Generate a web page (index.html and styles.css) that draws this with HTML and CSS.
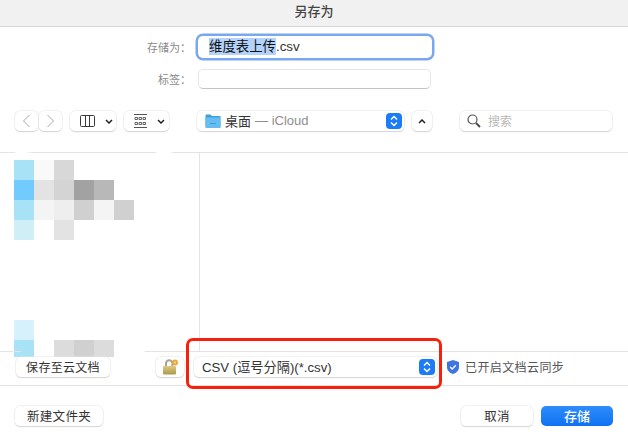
FILE: index.html
```html
<!DOCTYPE html>
<html lang="zh">
<head>
<meta charset="utf-8">
<title>另存为</title>
<link rel="stylesheet" href="styles.css">
</head>
<body>
<div class="dialog">
  <header class="titlebar">另存为</header>
  <section class="form">
    <div class="form-row">
      <label class="form-label">存储为：</label>
      <div class="field field-focus"><span class="sel">维度表上传</span>.csv</div>
    </div>
    <div class="form-row form-row-tags">
      <label class="form-label">标签：</label>
      <div class="field field-tags"></div>
    </div>
  </section>
  <nav class="toolbar">
    <div class="seg">
      <div class="btn nav-btn"><svg width="9" height="14" viewBox="0 0 9 14"><path d="M7.500 1 1.500 7l6 6" fill="none" stroke="#a8a8a8" stroke-width="1"/></svg></div>
      <div class="btn nav-btn"><svg width="9" height="14" viewBox="0 0 9 14"><path d="M1.500 1l6 6-6 6" fill="none" stroke="#a8a8a8" stroke-width="1"/></svg></div>
    </div>
    <div class="btn view-btn">
      <svg width="15" height="12" viewBox="0 0 15 12"><path d="M1.500.5h12a1 1 0 0 1 1 1v9a1 1 0 0 1-1 1h-12a1 1 0 0 1-1-1v-9a1 1 0 0 1 1-1zM5.500.5v11M9.500.5v11" fill="none" stroke="#3a3a3a"/></svg>
      <svg class="chev" width="8" height="5" viewBox="0 0 8 5"><path d="M1 1l3 3 3-3" fill="none" stroke="#222" stroke-width="1.500"/></svg>
    </div>
    <div class="btn grid-btn">
      <svg width="13" height="14" viewBox="0 0 13 14"><path d="M0 .5h13M0 13.500h13" stroke="#555"/><path d="M1 3.500h2.500v2H1zM5 3.500h2.500v2H5zM9 3.500h2.500v2H9zM1 8.500h2.500v2H1zM5 8.500h2.500v2H5zM9 8.500h2.500v2H9z" fill="none" stroke="#555" stroke-width=".9"/></svg>
      <svg class="chev" width="8" height="5" viewBox="0 0 8 5"><path d="M1 1l3 3 3-3" fill="none" stroke="#222" stroke-width="1.500"/></svg>
    </div>
    <div class="btn path-btn">
      <svg class="folder" width="16" height="14" viewBox="0 0 16 14"><path d="M.5 1.500a1 1 0 0 1 1-1h4l1.500 1.500h7.500a1 1 0 0 1 1 1V13a.8.8 0 0 1-.8.8H1.300A.8.8 0 0 1 .5 13z" fill="#3f9fd8"/><path d="M.5 3.500h15V13a.8.8 0 0 1-.8.800H1.300A.8.800 0 0 1 .5 13z" fill="#66bef0"/><path d="M5 9.500h6" stroke="#3f9dd0"/></svg>
      <span class="path-name">桌面</span><span class="path-loc">— iCloud</span>
      <span class="stepper"><svg width="8" height="12" viewBox="0 0 8 12"><path d="M1 4.500l3-3 3 3M1 7.500l3 3 3-3" fill="none" stroke="#fff" stroke-width="1.500"/></svg></span>
    </div>
    <div class="btn up-btn"><svg width="8" height="5" viewBox="0 0 8 5"><path d="M1 4l3-3 3 3" fill="none" stroke="#222" stroke-width="1.500"/></svg></div>
    <div class="btn search">
      <svg width="14" height="14" viewBox="0 0 14 14"><circle cx="5.500" cy="5.500" r="4.500" fill="none" stroke="#555" stroke-width="1.200"/><path d="M9 9l4 4" stroke="#444" stroke-width="1.800"/></svg>
      <span class="search-text">搜索</span>
    </div>
  </nav>
  <main class="browser">
    <aside class="sidebar">
      <div class="mosaic">
        <i class="c1"></i><i class="c2"></i><i class="c3"></i><i></i><i></i><i></i>
        <i class="c4"></i><i class="c5"></i><i class="c6"></i><i class="c7"></i><i class="c8"></i><i></i>
        <i class="c1"></i><i class="c9"></i><i class="c10"></i><i class="c11"></i><i class="c9"></i><i class="c11"></i>
        <i class="c12"></i><i></i><i class="c5"></i><i></i><i></i><i></i>
      </div>
      <div class="mosaic mosaic-low">
        <i class="c13"></i><i></i><i></i><i></i><i></i><i></i>
        <i class="c1"></i><i></i><i class="c14"></i><i class="c15"></i><i class="c14"></i><i></i>
      </div>
    </aside>
    <div class="files"></div>
  </main>
  <section class="optbar">
    <div class="btn text-btn cloud-btn">保存至云文档</div>
    <div class="btn lock-btn">
      <svg width="17" height="16" viewBox="0 0 17 16"><defs><linearGradient id="lockBody" x1="0" y1="0" x2="0" y2="1"><stop offset="0" stop-color="#dccb84"/><stop offset="1" stop-color="#ad9748"/></linearGradient></defs><path d="M4 8V4.500a3.200 3.200 0 0 1 6.400 0V8" fill="none" stroke="#a8a58c" stroke-width="2"/><rect x="1" y="7" width="13" height="8.500" rx="1" fill="url(#lockBody)"/><circle cx="13" cy="3.500" r="3" fill="#eca83a"/><circle cx="13" cy="3.500" r="1" fill="#f8dca0"/></svg>
    </div>
    <div class="btn format">
      <span class="format-text">CSV (逗号分隔)(*.csv)</span>
      <span class="stepper"><svg width="8" height="12" viewBox="0 0 8 12"><path d="M1 4.500l3-3 3 3M1 7.500l3 3 3-3" fill="none" stroke="#fff" stroke-width="1.500"/></svg></span>
    </div>
    <svg class="shield" width="12" height="14" viewBox="0 0 12 14"><path d="M6 0l6 2v5c0 3.500-2.500 5.800-6 7-3.500-1.200-6-3.500-6-7V2z" fill="#3d76e0"/><path d="M3.200 7l2 2 3.600-3.800" fill="none" stroke="#fff" stroke-width="1.300"/></svg>
    <span class="sync">已开启文档云同步</span>
    <div class="annotation"></div>
  </section>
  <footer class="actions">
    <div class="btn text-btn new-btn">新建文件夹</div>
    <div class="spacer"></div>
    <div class="btn text-btn cancel-btn">取消</div>
    <div class="btn save-btn">存储</div>
  </footer>
</div>
</body>
</html>
```
FILE: styles.css
```css
* { box-sizing: border-box; }
html, body { margin: 0; padding: 0; background: #fff; }
body { font-family: "Liberation Sans", "Noto Sans CJK SC", sans-serif; font-size: 12px; color: #2a2a2a; }
.dialog { width: 628px; height: 440px; display: flex; flex-direction: column; overflow: hidden; }
.titlebar { height: 27px; flex: none; background: #f1f1f1; border-bottom: 1px solid #d6d6d6; text-align: center; font-size: 13px; line-height: 24px; font-weight: 500; color: #444; }
.form { padding: 9px 0 0; }
.form-row { display: flex; align-items: center; height: 22px; }
.form-row-tags { margin-top: 11px; height: 20px; }
.form-label { width: 191px; text-align: right; font-size: 11px; color: #8a8a8a; padding-bottom: 1px; }
.field { margin-left: 7px; width: 234px; background: #fff; }
.field-focus { height: 22px; font-size: 13.400px; line-height: 21px; color: #333; padding-left: 11px; border-radius: 5px; box-shadow: 0 0 0 2.500px #7aa8f0; }
.sel { background: #b3d3fb; color: #111; display: inline-block; height: 17px; line-height: 17px; vertical-align: top; margin-top: 2px; }
.field-tags { height: 20px; width: 233px; border: 1px solid #e6e6e6; border-bottom-color: #c4c4c4; border-radius: 5px; }
.toolbar { margin-top: 22px; padding-left: 15px; display: flex; height: 20px; }
.btn { height: 20px; background: #fff; border-radius: 5px; box-shadow: 0 0 0 .5px #e3e3e3, 0 1px 1px rgba(0,0,0,.22); display: flex; align-items: center; flex: none; }
.seg { display: flex; gap: 1px; }
.nav-btn { width: 23px; justify-content: center; }
.view-btn { width: 46px; margin-left: 8px; padding-left: 10px; }
.grid-btn { width: 45px; margin-left: 8px; padding-left: 10px; }
.chev { margin-left: 10px; }
.grid-btn .chev { margin-left: 10px; }
.path-btn { width: 207px; margin-left: 28px; padding-left: 8px; font-size: 13px; }
.folder { flex: none; }
.path-name { margin-left: 4px; color: #333; padding-bottom: 1px; }
.path-loc { margin-left: 4px; color: #8e8e8e; padding-bottom: 1px; }
.stepper { width: 16px; height: 16px; background: #1c7bf6; border-radius: 4px; display: flex; align-items: center; justify-content: center; margin-left: auto; margin-right: 2px; flex: none; }
.up-btn { width: 20px; margin-left: 8px; justify-content: center; }
.search { width: 152px; margin-left: 28px; padding-left: 7px; }
.search-text { margin-left: 7px; color: #b8b8b8; font-size: 12px; padding-bottom: 1px; }
.browser { margin-top: 21px; height: 199px; flex: none; display: flex; border-style: solid; border-width: 1px 0 0; border-image: linear-gradient(90deg, #e3e3e3 14px, transparent 18px, transparent 26px, #e3e3e3 34px, #e3e3e3 155px, transparent 158px, transparent 170px, #e3e3e3 174px) 1; }
.sidebar { width: 200px; flex: none; border-right: 1px solid #e3e3e3; padding: 7px 0 0 14px; display: flex; flex-direction: column; justify-content: space-between; }
.mosaic { display: grid; grid-template-columns: repeat(6, 20px); grid-auto-rows: 20px; }
.mosaic-low { grid-template-rows: 20px 17px; margin-bottom: -6px; }
.files { flex: 1; }
.c1 { background: #a8e2f6; } .c2 { background: #f9f9f9; } .c3 { background: #d8d8d8; }
.c4 { background: #72cbfd; } .c5 { background: #e3e3e3; } .c6 { background: #d4d4d4; }
.c7 { background: #a2a2a2; } .c8 { background: #b8b8b8; } .c9 { background: #f4f4f4; }
.c10 { background: #eeeeee; } .c11 { background: #d0d0d0; } .c12 { background: #cfeef6; }
.c13 { background: #d6f1fc; } .c14 { background: #dcdcdc; } .c15 { background: #d0d0d0; }
.optbar { height: 34px; flex: none; position: relative; display: flex; align-items: center; padding: 0 0 3px 16px; border-style: solid; border-width: 1px 0 0; border-image: linear-gradient(90deg, #e3e3e3 20px, transparent 24px, transparent 144px, #e3e3e3 147px) 1; font-size: 12px; }
.text-btn { justify-content: center; color: #333; letter-spacing: .3px; padding-bottom: 1px; }
.cloud-btn { width: 94px; }
.lock-btn { width: 28px; margin-left: 46px; justify-content: center; }
.format { width: 243px; margin-left: 10px; padding-left: 8px; color: #333; font-size: 13.200px; }
.format-text { padding-bottom: 1px; }
.shield { margin-left: 10px; flex: none; }
.sync { margin-left: 6px; color: #555; letter-spacing: .4px; padding-bottom: 1px; }
.annotation { position: absolute; left: 186px; top: -14px; width: 256px; height: 51px; border: 3px solid #f7200c; border-radius: 7px; }
.actions { display: flex; padding: 20px 15px 0; border-top: 1px solid #e3e3e3; }
.new-btn { width: 88px; font-size: 12.500px; }
.spacer { flex: 1; }
.cancel-btn { width: 72px; font-size: 12.500px; }
.save-btn { width: 72px; margin-left: 8px; justify-content: center; color: #fff; background: linear-gradient(#2f8cfb, #0f72f2); box-shadow: none; font-weight: 500; font-size: 13px; padding-bottom: 1px; }
```
